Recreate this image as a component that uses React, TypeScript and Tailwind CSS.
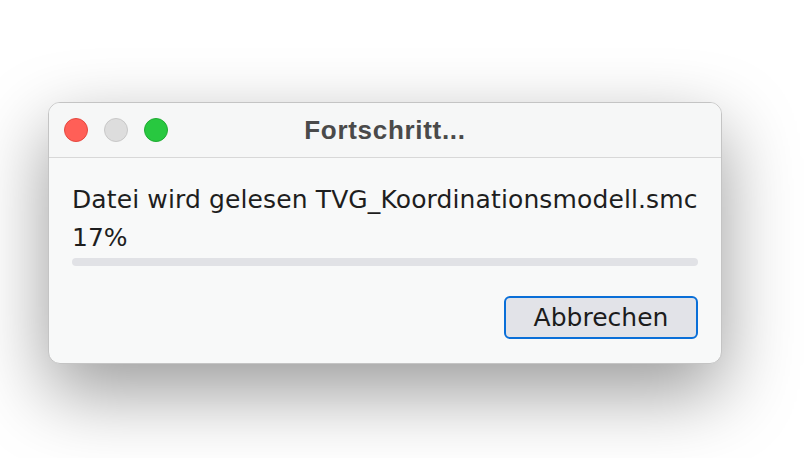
import React from "react";

export default function App() {
  return (
    <div className="w-[806px] h-[458px] bg-white overflow-hidden pl-[48px] pt-[102px]">
      <div
        className="w-[674px] h-[262px] rounded-[12px] bg-[#f8f9f9] border border-[#c4c4c4] shadow-[0_28px_75px_rgba(0,0,0,0.4)] flex flex-col overflow-hidden"
      >
        <div className="relative h-[55px] shrink-0 border-b border-[#d8d8d8] bg-[#f6f7f7] flex items-center pl-[15px]">
          <div className="flex items-center gap-[16px]">
            <div className="w-[24px] h-[24px] rounded-full bg-[#ff5f57] border border-[#e5483f]" />
            <div className="w-[24px] h-[24px] rounded-full bg-[#dddddd] border border-[#c8c8c8]" />
            <div className="w-[24px] h-[24px] rounded-full bg-[#28c840] border border-[#1fab32]" />
          </div>
          <div className="absolute inset-0 flex items-center justify-center pointer-events-none">
            <span className="font-['Liberation_Sans',sans-serif] font-bold text-[26px] tracking-[0.7px] text-[#4a4a4a]">
              Fortschritt...
            </span>
          </div>
        </div>
        <div className="flex flex-col px-[23px] pt-[23px] font-['DejaVu_Sans',sans-serif] text-[#1e1e1e] text-[25px]">
          <div className="leading-[38px] whitespace-nowrap tracking-[0.12px]">Datei wird gelesen TVG_Koordinationsmodell.smc</div>
          <div className="leading-[38px]">17%</div>
          <div className="mt-[1px] h-[8px] w-[626px] rounded-full bg-[#e1e2e6]" />
          <div className="flex justify-end mt-[30px]">
            <button className="w-[194px] h-[43px] rounded-[6px] border-2 border-[#0a6fd8] bg-[#e2e3e8] text-[#1c1c1c] text-[25px] leading-none font-['DejaVu_Sans',sans-serif]">
              Abbrechen
            </button>
          </div>
        </div>
      </div>
    </div>
  );
}
